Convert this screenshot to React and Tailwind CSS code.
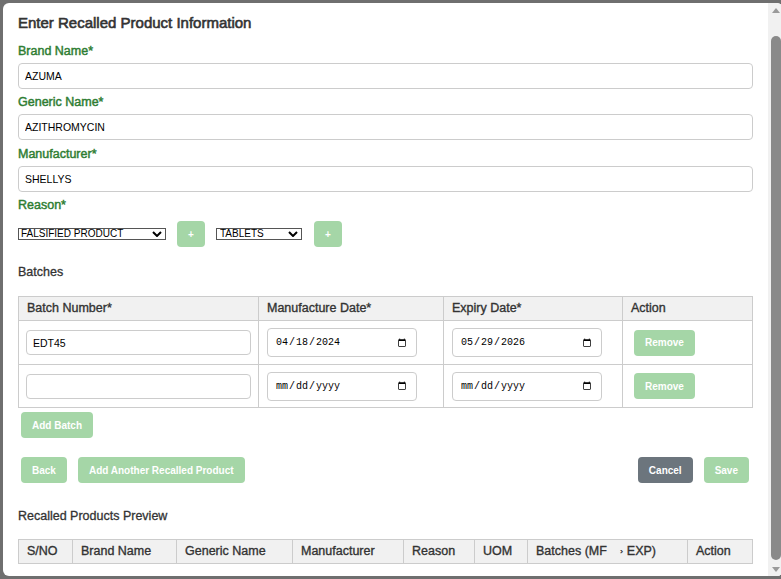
import React from "react";

function Label({ children, className = "" }) {
  return (
    <div
      className={`text-[12.5px] leading-[16px] text-[#2e7d32] [-webkit-text-stroke:0.45px_#2e7d32] ${className}`}
    >
      {children}
    </div>
  );
}

function TextInput({ value }) {
  return (
    <input
      type="text"
      defaultValue={value}
      className="mt-[4px] block h-[26px] w-full rounded-[4px] border border-[#ccc] bg-white px-[6px] text-[10.5px] text-black outline-none"
    />
  );
}

function Chevron() {
  return (
    <svg
      className="pointer-events-none absolute right-[4px] top-[3px]"
      width="10"
      height="6"
      viewBox="0 0 10 6"
    >
      <path d="M1 1 L5 5 L9 1" stroke="#000" strokeWidth="2" fill="none" />
    </svg>
  );
}

const btnGreen =
  "flex h-[26px] items-center justify-center rounded-[4px] bg-[#a5d6a7] px-[11px] text-[10px] font-bold text-white";

function DateInput({ value }) {
  return (
    <input
      type="date"
      defaultValue={value}
      className="h-[29px] w-[150px] rounded-[4px] border border-[#ccc] bg-white px-[7px] font-['Liberation_Mono',monospace] text-[10px] text-black outline-none [&::-webkit-datetime-edit-month-field]:bg-transparent [&::-webkit-datetime-edit-month-field]:text-black"
    />
  );
}

const th =
  "flex items-center border-r border-[#ccc] pl-[8px] text-[12.5px] text-[#333] [-webkit-text-stroke:0.35px_#333]";
const thLast =
  "flex items-center pl-[8px] text-[12.5px] text-[#333] [-webkit-text-stroke:0.35px_#333]";

function BatchRow({ batch, mfg, exp, h }) {
  return (
    <div className={`grid grid-cols-[240px_185px_179px_129px] border-b border-[#ccc] ${h}`}>
      <div className="flex items-center border-r border-[#ccc] px-[7px]">
        <input
          type="text"
          defaultValue={batch}
          className="block h-[25px] w-full rounded-[4px] border border-[#ccc] bg-white px-[6px] text-[10.5px] text-black outline-none"
        />
      </div>
      <div className="flex items-center border-r border-[#ccc] pl-[8px]">
        <DateInput value={mfg} />
      </div>
      <div className="flex items-center border-r border-[#ccc] pl-[8px]">
        <DateInput value={exp} />
      </div>
      <div className="flex items-center pl-[11px]">
        <button className={btnGreen}>Remove</button>
      </div>
    </div>
  );
}

function Scrollbar() {
  return (
    <div className="flex h-full w-[15px] shrink-0 flex-col bg-[#f1f1f1]">
      <div className="flex h-[14px] items-center justify-center">
        <svg width="8" height="5" viewBox="0 0 8 5">
          <path d="M0 5 L4 0 L8 5 Z" fill="#9a9a9a" />
        </svg>
      </div>
      <div className="ml-[3px] mt-[19px] h-[524px] w-[10px] rounded-[5px] bg-[#8a8a8a]" />
      <div className="mt-auto flex h-[14px] items-center justify-center">
        <svg width="8" height="5" viewBox="0 0 8 5">
          <path d="M0 0 L8 0 L4 5 Z" fill="#9a9a9a" />
        </svg>
      </div>
    </div>
  );
}

export default function App() {
  return (
    <div className="h-[579px] w-[781px] overflow-hidden bg-[#6f6f6f] pl-[3px] pt-[3px] font-['Liberation_Sans',Arial,sans-serif]">
      <div className="flex h-[573px] w-[780px] overflow-hidden rounded-[6px] bg-white">
        <div className="min-w-0 flex-1 overflow-hidden px-[15px] pt-[10px]">
          <h2 className="text-[15px] leading-[20px] text-[#333] [-webkit-text-stroke:0.6px_#333]">
            Enter Recalled Product Information
          </h2>

          <Label className="mt-[10px]">Brand Name*</Label>
          <TextInput value="AZUMA" />
          <Label className="mt-[5px]">Generic Name*</Label>
          <TextInput value="AZITHROMYCIN" />
          <Label className="mt-[6px]">Manufacturer*</Label>
          <TextInput value="SHELLYS" />
          <Label className="mt-[5px]">Reason*</Label>

          <div className="mt-[8px] flex items-center gap-[11px]">
            <div className="relative">
              <select className="block h-[12px] w-[148px] appearance-none rounded-none border border-[#555] bg-white py-0 pl-[2px] text-[10px] leading-[10px] text-black outline-none">
                <option>FALSIFIED PRODUCT</option>
              </select>
              <Chevron />
            </div>
            <button className={`${btnGreen} w-[28px] px-0`}>+</button>
            <div className="relative">
              <select className="block h-[12px] w-[86px] appearance-none rounded-none border border-[#555] bg-white py-0 pl-[3px] text-[10px] leading-[10px] text-black outline-none">
                <option>TABLETS</option>
              </select>
              <Chevron />
            </div>
            <button className={`${btnGreen} ml-[1px] w-[28px] px-0`}>+</button>
          </div>

          <div className="mt-[17px] text-[12.5px] leading-[16px] text-[#333] [-webkit-text-stroke:0.3px_#333]">
            Batches
          </div>

          <div className="mt-[16px] border-x border-t border-[#ccc]">
            <div className="grid h-[24px] grid-cols-[240px_185px_179px_129px] border-b border-[#ccc] bg-[#f1f1f1]">
              <div className={th}>Batch Number*</div>
              <div className={th}>Manufacture Date*</div>
              <div className={th}>Expiry Date*</div>
              <div className={thLast}>Action</div>
            </div>
            <BatchRow batch="EDT45" mfg="2024-04-18" exp="2026-05-29" h="h-[44px]" />
            <BatchRow batch="" mfg="" exp="" h="h-[43px]" />
          </div>

          <div className="mt-[4px] flex pl-[3px]">
            <button className={btnGreen}>Add Batch</button>
          </div>

          <div className="mt-[19px] flex items-center justify-between pl-[3px] pr-[4px]">
            <div className="flex gap-[11px]">
              <button className={btnGreen}>Back</button>
              <button className={btnGreen}>Add Another Recalled Product</button>
            </div>
            <div className="flex gap-[11px]">
              <button className="flex h-[26px] items-center justify-center rounded-[4px] bg-[#6c757d] px-[11px] text-[10px] font-bold text-white">
                Cancel
              </button>
              <button className={btnGreen}>Save</button>
            </div>
          </div>

          <div className="mt-[25px] text-[12.5px] leading-[16px] text-[#333] [-webkit-text-stroke:0.3px_#333]">
            Recalled Products Preview
          </div>

          <div className="mt-[15px] border-x border-t border-[#ccc]">
            <div className="grid h-[24px] grid-cols-[54px_104px_116px_111px_71px_53px_160px_64px] border-b border-[#ccc] bg-[#f1f1f1]">
              <div className={th}>S/NO</div>
              <div className={th}>Brand Name</div>
              <div className={th}>Generic Name</div>
              <div className={th}>Manufacturer</div>
              <div className={th}>Reason</div>
              <div className={th}>UOM</div>
              <div className={th}>
                Batches (MF
                <span className="inline-block w-[16px] text-right text-[8px]">›</span>
                <span className="pl-[4px]">EXP)</span>
              </div>
              <div className={thLast}>Action</div>
            </div>
          </div>
        </div>
        <Scrollbar />
      </div>
    </div>
  );
}
